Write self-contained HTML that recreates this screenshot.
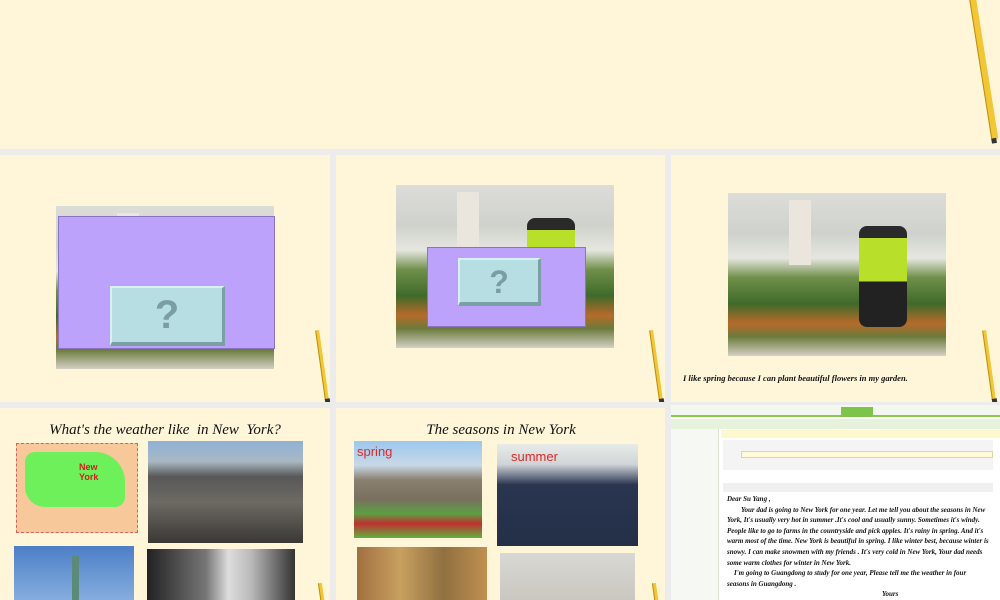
<!DOCTYPE html>
<html><head><meta charset="utf-8"><style>
*{margin:0;padding:0;box-sizing:border-box}
body{width:1000px;height:600px;background:#ececec;position:relative;overflow:hidden;font-family:"Liberation Serif",serif}
.s{position:absolute;background:#fff6da;overflow:hidden}
.a{position:absolute}
.g{position:absolute;background:linear-gradient(to bottom,#dcdcd8 0%,#cfd2cc 25%,#e6e6e0 40%,#6f8f4a 52%,#3f6a2a 68%,#b86a2a 80%,#6a7a3a 88%,#d4d0c6 100%)}
.g:before{content:"";position:absolute;left:60%;top:20%;width:22%;height:62%;background:linear-gradient(#2a2a2a 0 12%,#b8e02a 12% 55%,#222 55%);border-radius:8px}
.g:after{content:"";position:absolute;left:28%;top:4%;width:10%;height:40%;background:#eae6de}
.pur{position:absolute;background:#bda2fb;border:1px solid #8a74c0}
.btn{position:absolute;background:#b7dfe3;border-style:solid;border-width:2px 3px 4px 2px;border-color:#d8f0f2 #7aa0a4 #7aa0a4 #d8f0f2;color:#7a9ea3;font:bold 40px "Liberation Sans",sans-serif;text-align:center}
.pen{position:absolute;width:4px;background:#f2c634;border-left:1px solid #b89010;transform:rotate(-8deg)}
.pen:after{content:"";position:absolute;bottom:-4px;left:-1px;width:5px;height:5px;background:#333}
.t{position:absolute;font-style:italic;font-size:15px;color:#111;width:330px;text-align:center}
</style></head><body>
<div class="s" style="left:0;top:0;width:1000px;height:149px">
 <div class="pen" style="left:980px;top:-5px;width:7px;height:145px;transform:rotate(-9deg)"></div>
</div>

<div class="s" style="left:0;top:155px;width:330px;height:247px">
 <div class="g" style="left:56px;top:51px;width:218px;height:163px"></div>
 <div class="pur" style="left:58px;top:61px;width:217px;height:133px"></div>
 <div class="btn" style="left:110px;top:131px;width:115px;height:60px;line-height:54px">?</div>
 <div class="pen" style="left:320px;top:175px;height:70px"></div>
</div>
<div class="s" style="left:336px;top:155px;width:329px;height:247px">
 <div class="g" style="left:60px;top:30px;width:218px;height:163px"></div>
 <div class="pur" style="left:91px;top:92px;width:159px;height:80px"></div>
 <div class="btn" style="left:122px;top:103px;width:83px;height:48px;line-height:44px;font-size:32px">?</div>
 <div class="pen" style="left:318px;top:175px;height:70px"></div>
</div>
<div class="s" style="left:671px;top:155px;width:329px;height:247px">
 <div class="g" style="left:57px;top:38px;width:218px;height:163px"></div>
 <div class="a" style="left:12px;top:218px;font-style:italic;font-weight:bold;font-size:8.5px;color:#111">I like spring because I can plant beautiful flowers in my garden.</div>
 <div class="pen" style="left:316px;top:175px;height:70px"></div>
</div>

<div class="s" style="left:0;top:408px;width:330px;height:192px">
 <div class="t" style="top:14px">What's the weather like &nbsp;in New &nbsp;York?</div>
 <div class="a" style="left:16px;top:35px;width:122px;height:90px;background:#f6c89a;border:1px dashed #c66"><div class="a" style="left:8px;top:8px;width:100px;height:55px;background:#6ef05a;border-radius:10px 30px 10px 20px"></div><div class="a" style="left:62px;top:18px;color:#d02020;font:bold 9px 'Liberation Sans',sans-serif">New<br>York</div></div>
 <div class="a" style="left:148px;top:33px;width:155px;height:102px;background:linear-gradient(#8fb1d6 0%,#a9b8c2 20%,#585858 35%,#6d6a63 60%,#3a3835 100%)"></div>
 <div class="a" style="left:14px;top:138px;width:120px;height:60px;background:linear-gradient(#4d7fc6,#8cb2e2)"><div class="a" style="left:58px;top:10px;width:7px;height:50px;background:#5c8a78"></div></div>
 <div class="a" style="left:147px;top:141px;width:148px;height:60px;background:linear-gradient(90deg,#222 0%,#777 40%,#ddd 55%,#bbb 70%,#333 100%)"></div>
 <div class="pen" style="left:320px;top:175px;height:30px"></div>
</div>
<div class="s" style="left:336px;top:408px;width:329px;height:192px">
 <div class="t" style="top:14px">The seasons in New York</div>
 <div class="a" style="left:18px;top:33px;width:128px;height:97px;background:linear-gradient(#9cc7ef 0%,#c8d8e6 25%,#8a8070 40%,#7a7060 60%,#5aa040 75%,#c03030 85%,#60b040 100%)"><span class="a" style="left:3px;top:3px;color:#e02828;font:13px 'Liberation Sans',sans-serif">spring</span></div>
 <div class="a" style="left:161px;top:36px;width:141px;height:102px;background:linear-gradient(#e8ece8 0%,#cfd4d8 20%,#2a3550 40%,#233048 100%)"><span class="a" style="left:14px;top:5px;color:#e02828;font:13px 'Liberation Sans',sans-serif">summer</span></div>
 <div class="a" style="left:21px;top:139px;width:130px;height:60px;background:linear-gradient(90deg,#a07040,#c8a060,#907040,#c09050)"></div>
 <div class="a" style="left:164px;top:145px;width:135px;height:55px;background:linear-gradient(#d8d8d4,#c8c4bc)"></div>
 <div class="pen" style="left:318px;top:175px;height:30px"></div>
</div>
<div class="s" style="left:671px;top:405px;width:329px;height:195px;background:#fff">
 <div class="a" style="left:0;top:0;width:329px;height:12px;background:#f4f6f0;border-bottom:2px solid #8ac848"></div>
 <div class="a" style="left:170px;top:2px;width:32px;height:10px;background:#7cc44a"></div>
 <div class="a" style="left:0;top:14px;width:329px;height:10px;background:#e6f2dc"></div>
 <div class="a" style="left:0;top:24px;width:48px;height:171px;background:#f6f8f4;border-right:1px solid #d8e0d0"></div>
 <div class="a" style="left:50px;top:25px;width:279px;height:8px;background:#fdf8d0"></div>
 <div class="a" style="left:52px;top:35px;width:270px;height:30px;background:#f4f4f4"></div>
 <div class="a" style="left:70px;top:46px;width:252px;height:7px;background:#fffbd8;border:1px solid #dcd7a0"></div>
 <div class="a" style="left:52px;top:78px;width:270px;height:9px;background:#f0f0f0"></div>
 <div class="a" style="left:56px;top:89px;width:262px;font:italic bold 7px/10.6px 'Liberation Serif',serif;color:#111">Dear Su Yang ,<br>&nbsp;&nbsp;&nbsp;&nbsp;&nbsp;&nbsp;&nbsp;&nbsp;Your dad is going to New York for one year. Let me tell you about the seasons in New York, It's usually very hot in summer .It's cool and usually sunny. Sometimes it's windy. People like to go to farms in the countryside and pick apples. It's rainy in spring. And it's warm most of the time. New York is beautiful in spring. I like winter best, because winter is snowy. I can make snowmen with my friends . It's very cold in New York, Your dad needs some warm clothes for winter in New York.<br>&nbsp;&nbsp;&nbsp;&nbsp;I'm going to Guangdong to study for one year, Please tell me the weather in four seasons in Guangdong .<br><span style="margin-left:155px">Yours</span></div>
</div>
</body></html>
